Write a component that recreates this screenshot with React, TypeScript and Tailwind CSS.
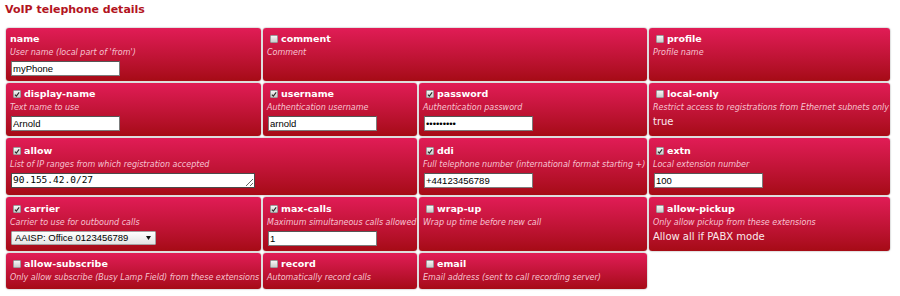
import React from 'react'
import clsx from 'clsx'

const Check = ({ on }: { on: boolean }) => (
  <span className="mr-[3px] ml-[3px] inline-flex h-[8px] w-[8px] shrink-0 items-center justify-center rounded-[1px] border border-[#9c9c9c] bg-linear-to-b from-[#f6f6f6] to-[#cdcdcd]">
    {on && (
      <svg viewBox="0 0 8 8" className="h-[7px] w-[7px]">
        <path d="M1.2 4.1 L3.1 6.1 L6.9 1.2" fill="none" stroke="#2a2a2a" strokeWidth="1.5" />
      </svg>
    )}
  </span>
)

type CardProps = {
  label: string
  desc: string
  check?: boolean
  span2?: boolean
  pad?: string
  children?: React.ReactNode
}

const Card = ({ label, desc, check, span2, pad = 'pt-[4px] pb-[5px]', children }: CardProps) => (
  <div
    className={clsx(
      'flex flex-col rounded-[3px] bg-linear-to-b from-[#e11c56] to-[#a60b15] px-[4px] shadow-[0_0_1.5px_rgba(0,0,0,0.6)]',
      span2 && 'col-span-2',
      pad
    )}
  >
    <div className="flex h-[14px] items-center text-[9.5px] leading-[14px] font-bold text-white">
      {check !== undefined && <Check on={check} />}
      <span>{label}</span>
    </div>
    <div className="text-[8px] leading-[13px] text-[#f7c4d2] italic whitespace-nowrap">{desc}</div>
    {children}
  </div>
)

const Input = ({ value, type = 'text' }: { value: string; type?: string }) => (
  <input
    type={type}
    readOnly
    value={value}
    className="mt-[2px] ml-[1px] h-[15px] w-[109px] border border-[#7c7c7c] border-t-[#555] bg-white px-[1px] font-['Liberation_Sans',Arial,sans-serif] text-[9.5px] text-black outline-none"
  />
)

const Value = ({ text }: { text: string }) => (
  <div className="text-[10px] leading-[15px] text-[#fbe9ee]">{text}</div>
)

export default function App() {
  return (
    <div className="h-[296px] w-[900px] bg-white font-['DejaVu_Sans',Verdana,sans-serif]">
      <h1 className="pt-[3px] pl-[5px] text-[11px] leading-[14px] font-bold text-[#b3141e]">VoIP telephone details</h1>

      <div className="mt-[11px] ml-[6px] grid w-[884px] grid-cols-[255px_154px_228px_241px] gap-[2px]">
        {/* row 1 */}
        <Card label="name" desc="User name (local part of 'from')">
          <Input value="myPhone" />
        </Card>
        <Card label="comment" desc="Comment" check={false} span2 />
        <Card label="profile" desc="Profile name" check={false} />

        {/* row 2 */}
        <Card label="display-name" desc="Text name to use" check>
          <Input value="Arnold" />
        </Card>
        <Card label="username" desc="Authentication username" check>
          <Input value="arnold" />
        </Card>
        <Card label="password" desc="Authentication password" check>
          <Input value="123456789" type="password" />
        </Card>
        <Card label="local-only" desc="Restrict access to registrations from Ethernet subnets only" check={false}>
          <Value text="true" />
        </Card>

        {/* row 3 */}
        <Card label="allow" desc="List of IP ranges from which registration accepted" check span2 pad="pt-[6px] pb-[7px]">
          <textarea
            rows={1}
            readOnly
            value="90.155.42.0/27"
            className="mt-[2px] ml-[1px] block h-[15px] w-[244px] resize overflow-hidden border border-[#4a4a4a] bg-white px-[1px] font-['DejaVu_Sans_Mono',monospace] text-[9.5px] leading-[12px] text-black outline-none"
          />
        </Card>
        <Card label="ddi" desc="Full telephone number (international format starting +)" check pad="pt-[6px] pb-[5px]">
          <Input value="+44123456789" />
        </Card>
        <Card label="extn" desc="Local extension number" check pad="pt-[6px] pb-[5px]">
          <Input value="100" />
        </Card>

        {/* row 4 */}
        <Card label="carrier" desc="Carrier to use for outbound calls" check pad="pt-[5px] pb-[5px]">
          <div className="relative mt-[2px] ml-[1px] w-[145px]">
            <select className="block h-[14px] w-full appearance-none rounded-[1px] border border-[#a4a4a4] bg-linear-to-b from-white to-[#e4e4e4] pl-[3px] font-['Liberation_Sans',Arial,sans-serif] text-[9.5px] leading-[12px] text-black outline-none">
              <option>AAISP: Office 0123456789</option>
            </select>
            <svg viewBox="0 0 5 4" className="pointer-events-none absolute top-[5px] right-[5px] h-[4px] w-[5px]">
              <path d="M0 0 H5 L2.5 4 Z" fill="#111" />
            </svg>
          </div>
        </Card>
        <Card label="max-calls" desc="Maximum simultaneous calls allowed" check pad="pt-[5px] pb-[5px]">
          <Input value="1" />
        </Card>
        <Card label="wrap-up" desc="Wrap up time before new call" check={false} pad="pt-[5px] pb-[5px]" />
        <Card label="allow-pickup" desc="Only allow pickup from these extensions" check={false} pad="pt-[5px] pb-[5px]">
          <Value text="Allow all if PABX mode" />
        </Card>

        {/* row 5 */}
        <Card label="allow-subscribe" desc="Only allow subscribe (Busy Lamp Field) from these extensions" check={false} />
        <Card label="record" desc="Automatically record calls" check={false} />
        <Card label="email" desc="Email address (sent to call recording server)" check={false} />
      </div>
    </div>
  )
}
